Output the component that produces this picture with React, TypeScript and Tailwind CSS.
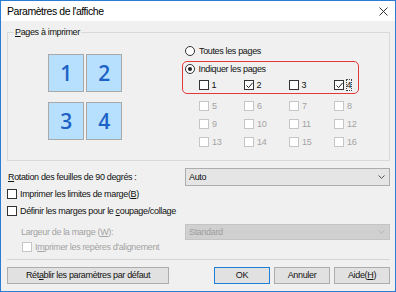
import React from "react";

const Check = () => (
  <svg width="9" height="9" viewBox="0 0 9 9" className="absolute left-0 top-0">
    <path d="M1.5 4.5 L3.6 6.6 L7.6 1.8" fill="none" stroke="#222" strokeWidth="1" />
  </svg>
);

function Box({ checked = false, disabled = false }: { checked?: boolean; disabled?: boolean }) {
  return (
    <span
      className={
        "relative inline-block w-[10px] h-[10px] shrink-0 border bg-white " +
        (disabled ? "border-[#c6c6c6]" : "border-[#333333]")
      }
    >
      {checked && <Check />}
    </span>
  );
}

function Radio({ on = false }: { on?: boolean }) {
  return (
    <span className="relative inline-flex items-center justify-center w-[10px] h-[10px] shrink-0 rounded-full border border-[#333333] bg-white">
      {on && <span className="w-[4px] h-[4px] rounded-full bg-[#222]" />}
    </span>
  );
}

function Chevron({ color }: { color: string }) {
  return (
    <svg width="7" height="4" viewBox="0 0 7 4">
      <path d="M0.5 0.5 L3.5 3.3 L6.5 0.5" fill="none" stroke={color} strokeWidth="1" />
    </svg>
  );
}

function Tile({ n }: { n: string }) {
  return (
    <div className="w-[36px] h-[38px] border border-[#a9a9a9] bg-[#b7e0ff] flex items-center justify-center text-[21px] font-semibold text-[#1d63c6] font-['Open_Sans',sans-serif] leading-none">
      {n}
    </div>
  );
}

function Cell({ n, checked = false, disabled = false, focus = false }: { n: string; checked?: boolean; disabled?: boolean; focus?: boolean }) {
  return (
    <div className="flex items-center h-[12px]">
      <Box checked={checked} disabled={disabled} />
      {focus ? (
        <span className="ml-[2px] h-[12px] px-[1px] flex items-center leading-[10px] text-[#111] outline outline-1 outline-dotted outline-[#444] -outline-offset-1">
          {n}
        </span>
      ) : (
        <span className={"ml-[2px] px-[1px] leading-[11px] " + (disabled ? "text-[#a3a3a3]" : "text-[#111]")}>{n}</span>
      )}
    </div>
  );
}

export default function App() {
  return (
    <div className="w-[396px] h-[292px] flex flex-col border border-[#2b7cd3] bg-[#f0f0f0] text-[9px] leading-[11px] text-[#111] tracking-[-0.35px] font-['Liberation_Sans',Arial,sans-serif] overflow-hidden">
      {/* title bar */}
      <div className="h-[20px] shrink-0 bg-white flex items-center justify-between pl-[6px] pr-[6px]">
        <span className="text-[10.5px] tracking-[-0.45px] text-black">Paramètres de l'affiche</span>
        <svg width="9" height="9" viewBox="0 0 9 9" className="mr-[1px]">
          <path d="M0.5 0.5 L8.5 8.5 M8.5 0.5 L0.5 8.5" stroke="#333" strokeWidth="1" />
        </svg>
      </div>

      {/* body */}
      <div className="flex-1 flex flex-col pl-[6px] pr-[5px]">
        <fieldset className="mt-[6px] h-[134px] border border-[#d9d9d9] px-0 pb-0">
          <legend className="ml-[6px] px-[1px] leading-[11px]">
            <span className="underline">P</span>ages à imprimer
          </legend>
          <div className="flex">
            <div className="ml-[40px] mt-[16px] grid grid-cols-[36px_36px] gap-[2px]">
              <Tile n="1" />
              <Tile n="2" />
              <Tile n="3" />
              <Tile n="4" />
            </div>
            <div className="ml-[60px] w-[177px] flex flex-col">
              <div className="mt-[7px] h-[12px] flex items-center pl-[3px]">
                <Radio />
                <span className="ml-[4px]">Toutes les pages</span>
              </div>
              <div className="mt-[4px] h-[33px] border-[1.5px] border-[#e23a3a] rounded-[5px] flex flex-col">
                <div className="mt-[1px] h-[12px] flex items-center pl-[1.5px]">
                  <Radio on />
                  <span className="ml-[4px]">Indiquer les pages</span>
                </div>
                <div className="mt-[4px] pl-[15.5px] grid grid-cols-[45px_45px_45px_45px]">
                  <Cell n="1" />
                  <Cell n="2" checked />
                  <Cell n="3" />
                  <Cell n="4" checked focus />
                </div>
              </div>
              <div className="mt-[6px] pl-[17px] grid grid-cols-[45px_45px_45px_45px] gap-y-[6px]">
                {["5", "6", "7", "8", "9", "10", "11", "12", "13", "14", "15", "16"].map((n) => (
                  <Cell key={n} n={n} disabled />
                ))}
              </div>
            </div>
          </div>
        </fieldset>

        {/* rotation */}
        <div className="mt-[7px] h-[18px] flex items-center justify-between">
          <span className="pl-[1px]">
            <span className="underline">R</span>otation des feuilles de 90 degrés :
          </span>
          <div className="w-[205px] h-[18px] border border-[#adadad] bg-[#e5e5e5] flex items-center justify-between pl-[3px] pr-[4px]">
            <span>Auto</span>
            <Chevron color="#555" />
          </div>
        </div>

        <div className="mt-[2px] h-[12px] flex items-center">
          <Box />
          <span className="ml-[3px]">
            Imprimer les limites de marge(<span className="underline">B</span>)
          </span>
        </div>
        <div className="mt-[5px] h-[12px] flex items-center">
          <Box />
          <span className="ml-[3px]">
            Définir les marges pour le <span className="underline">c</span>oupage/collage
          </span>
        </div>

        <div className="mt-[7px] h-[16px] flex items-center justify-between">
          <span className="pl-[14px] text-[#a3a3a3]">
            Largeur de la marge (<span className="underline">W</span>):
          </span>
          <div className="w-[205px] h-[16px] border border-[#c4c4c4] bg-[#d0d0d0] flex items-center justify-between pl-[3px] pr-[4px] text-[#9d9d9d]">
            <span>Standard</span>
            <Chevron color="#b5b5b5" />
          </div>
        </div>

        <div className="mt-[1px] h-[12px] flex items-center pl-[15px]">
          <Box disabled />
          <span className="ml-[3px] text-[#a3a3a3]">
            I<span className="underline">m</span>primer les repères d'alignement
          </span>
        </div>

        <div className="mt-[6px] h-px bg-[#d5d5d5] w-full" />

        <div className="mt-[7px] flex items-center">
          <button className="w-[162px] h-[17px] border border-[#adadad] bg-[#e1e1e1] flex items-center justify-center">
            Rét<span className="underline">a</span>blir les paramètres par défaut
          </button>
          <button className="ml-[45px] w-[56px] h-[17px] border border-[#1f7fd6] bg-[#e1e1e1] flex items-center justify-center">
            OK
          </button>
          <button className="ml-[4px] w-[56px] h-[17px] border border-[#adadad] bg-[#e1e1e1] flex items-center justify-center">
            Annuler
          </button>
          <button className="ml-[4px] w-[56px] h-[17px] border border-[#adadad] bg-[#e1e1e1] flex items-center justify-center">
            Aide(<span className="underline">H</span>)
          </button>
        </div>
      </div>
    </div>
  );
}
